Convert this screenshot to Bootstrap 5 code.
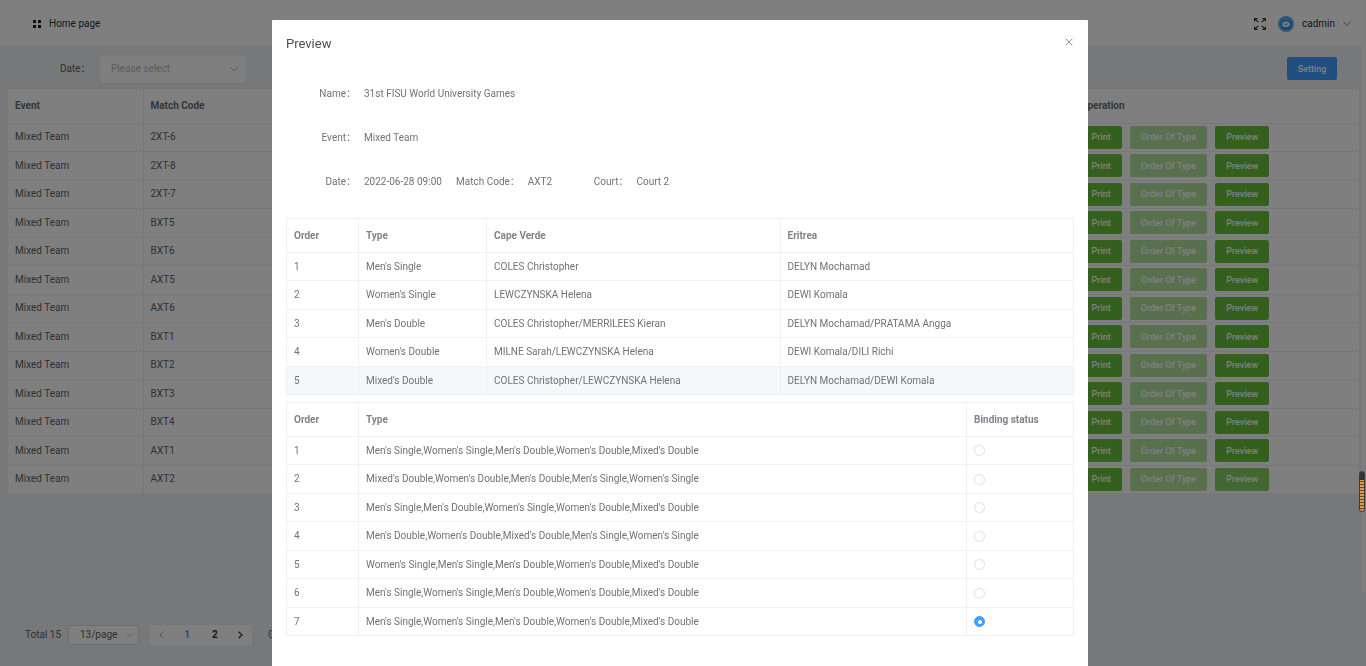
<!DOCTYPE html>
<html lang="en">
<head>
<meta charset="utf-8">
<meta name="viewport" content="width=device-width, initial-scale=1">
<title>Match preview</title>
<link href="https://cdn.jsdelivr.net/npm/bootstrap@5.3.0/dist/css/bootstrap.min.css" rel="stylesheet">
<style>
  body { font-family: Roboto, "Noto Sans CJK SC", sans-serif; font-size: 10px; line-height: 14px; color: #606266; background: #eef1f4; }
  button, input, select { font-family: inherit; }
  .topbar { height: 46px; padding: 2px 10px 0 33px; color: #303133; }
  .topbar a { color: inherit; }
  .filters { height: 43px; padding: 2px 24px 0 60px; }
  .filters label { width: 32px; white-space: nowrap; }
  .flat-select { font-size: 10px; line-height: 14px; border: 1px solid #dcdfe6; border-radius: 2px; color: #606266; background-color: #fff; background-size: 10px 10px; background-position: right 6px center;
    background-image: url("data:image/svg+xml,%3csvg xmlns='http://www.w3.org/2000/svg' viewBox='0 0 10 10'%3e%3cpath fill='none' stroke='%23b0b3ba' d='M1 3l4 4 4-4'/%3e%3c/svg%3e"); }
  .date-select { width: 146px; height: 28px; padding: 0 24px 0 10px; color: #b4b8c0; border-color: #f4f6f9; }
  .page-select { width: 71px; height: 20px; padding: 0 16px 0 11px; background-size: 8px 8px; background-position: right 4px center; }
  .small-btn { height: 23px; padding: 0 11px; border: 0; border-radius: 2px; font-size: 9px; line-height: 14px; color: #fff; font-weight: 500; }
  .btn-set { width: 50px; padding: 0; background: #409eff; }
  .btn-go { background: #67c23a; }
  .btn-go.is-hover { background: #85ce61; }
  .small-btn:disabled { background: #b3e19d; color: #fff; opacity: 1; }
  .op-buttons { gap: 8px; }
  .grid-table { table-layout: fixed; margin: 0; --bs-table-bg: #fff; --bs-table-color: #606266; }
  .grid-table > * > tr > * { padding: 0 7px; vertical-align: middle; border: 0 solid #eff1f5; border-bottom-width: 1px; border-right-width: 1px; color: inherit; }
  .grid-table th { color: #808388; font-weight: 700; }
  .grid-table thead tr { height: 34px; }
  .grid-table tbody tr:nth-child(odd) { height: 28px; }
  .grid-table tbody tr:nth-child(even) { height: 29px; }
  .boxed { border: solid #eff1f5; border-width: 1px 0 0 1px; margin-top: 14px; }
  .boxed + .boxed { margin-top: 7px; }
  .grid-table.boxed td { color: #707276; }
  .row-hover { --bs-table-bg: #f5f7fa; }
  .row-hover td { background: #f5f7fa; }
  .matches { margin: 0 2px 0 8px; }
  .matches .grid-table th { color: #6b6e74; }
  .matches .grid-table th:last-child, .matches .grid-table td:last-child { border-right: 0; }
  .foot { padding: 0 25px 21px; height: 41px; white-space: nowrap; }
  .foot > span:first-child { width: 35px; }
  .pager { background: #fff; border-radius: 2px; width: 102px; height: 20px; margin-left: 3px; }
  .pager button { width: 25px; padding: 0; border: 0; background: none; font-weight: 700; color: #303133; line-height: 20px; }
  .pager .arrow { width: 22px; }
  .pager button.current { color: #409eff; }
  .scroll-lane { width: 5px; height: 592px; background: #fafafc; }
  .modal { width: calc(100% - 6px); scrollbar-width: none; }
  .preview-dialog { max-width: 60%; margin: 20px auto; }
  .preview-dialog .modal-content { border: 0; border-radius: 1px; color: inherit; }
  .preview-dialog .modal-header { border: 0; padding: 14px 14px 6px; height: 52px; align-items: flex-start; }
  .preview-dialog .modal-title { font-size: 13px; line-height: 20px; font-weight: 400; color: #4c4e52; }
  .close-x { border: 0; background: none; padding: 4px 1px; line-height: 0; color: #909399; }
  .preview-dialog .modal-body { padding: 0 14px 60px; }
  .info-row { height: 44px; color: #707276; white-space: nowrap; }
  .info-row dt { font-weight: 400; text-align: right; }
  .info-row dt:first-child { width: 70px; }
  .info-row dd { margin: 0; padding-left: 8px; }
  .info-row .w-date { width: 100px; }
  .info-row .w-code { width: 74px; }
  .pick { margin: 0; width: 11px; height: 11px; border-color: #dcdfe6; display: block; }
  .pick:checked { background-color: #409eff; border-color: #409eff; background-size: 8px 8px; background-position: center; }
  .meter { right: 1px; top: 471px; width: 6px; height: 41px; border-radius: 3px; z-index: 1070; border: 1px solid #3a3a40;
    background: linear-gradient(#33333b 8px, transparent 8px), repeating-linear-gradient(#6b4a28 0 1px, #dc9a44 1px 3px); }
</style>
</head>
<body class="modal-open overflow-hidden">
<div class="vh-100 d-flex">
  <div class="flex-grow-1 d-flex flex-column">
    <header class="topbar bg-white d-flex align-items-center">
      <a href="#" class="d-flex align-items-center text-decoration-none">
        <svg width="8" height="8" viewBox="0 0 8 8" class="me-2" fill="#111"><rect width="3" height="3" rx=".6"/><rect x="5" width="3" height="3" rx=".6"/><rect y="5" width="3" height="3" rx=".6"/><rect x="5" y="5" width="3" height="3" rx=".6"/></svg>
        <span>Home page</span>
      </a>
      <div class="ms-auto d-flex align-items-center gap-2">
        <svg width="12" height="12" viewBox="0 0 12 12" fill="none" stroke="#333" stroke-width="1.1" class="me-1"><path d="M.6 3.6v-3h3M.6.6l3.6 3.6M8.4.6h3v3M11.4.6 7.8 4.2M.6 8.4v3h3M.6 11.4l3.6-3.6M8.4 11.4h3v-3M11.4 11.4 7.8 7.8"/></svg>
        <svg width="16" height="16" viewBox="0 0 16 16"><circle cx="8" cy="8" r="8" fill="#5fb0ee"/><circle cx="8" cy="8" r="6" fill="#3590de"/><path d="M4 4.4q4-3.4 8 0-4-1.4-8 0z" fill="#8fcbf8"/><rect x="4.2" y="5.6" width="7.6" height="5.4" rx="2.7" fill="#e6f4ff"/><path d="M6 7.6q2 2.2 4 0" fill="none" stroke="#3590de" stroke-width=".8"/></svg>
        <span>cadmin</span>
        <svg width="8" height="6" viewBox="0 0 8 6" fill="none" stroke="#808388"><path d="M.6.8 4 4.6 7.4.8"/></svg>
      </div>
    </header>
    <div class="filters d-flex align-items-center">
      <label for="date">Date：</label>
      <select id="date" class="form-select flat-select date-select ms-2"><option>Please select</option></select>
      <button class="btn small-btn btn-set ms-auto">Setting</button>
    </div>
    <div class="matches">
      <table class="table grid-table">
        <colgroup><col style="width:135px"><col><col style="width:286px"></colgroup>
        <thead><tr><th>Event</th><th>Match Code</th><th>Operation</th></tr></thead>
        <tbody id="matchRows"></tbody>
      </table>
    </div>
    <footer class="foot d-flex align-items-center mt-auto">
      <span>Total 15</span>
      <select class="form-select flat-select page-select mx-2" aria-label="Page size"><option>13/page</option></select>
      <div class="pager d-flex justify-content-between">
        <button class="arrow" aria-label="Previous"><svg width="5" height="8" viewBox="0 0 5 8" fill="none" stroke="#a8abb2"><path d="M4.3.8 1 4l3.3 3.2"/></svg></button>
        <button class="current">1</button>
        <button>2</button>
        <button class="arrow" aria-label="Next"><svg width="5" height="8" viewBox="0 0 5 8" fill="none" stroke="#303133" stroke-width="1.2"><path d="M.7.8 4 4 .7 7.2"/></svg></button>
      </div>
      <span class="ms-3">Go to</span>
    </footer>
  </div>
  <div class="scroll-lane flex-shrink-0"></div>
</div>

<div class="modal-backdrop show"></div>
<div class="modal show d-block" tabindex="-1" role="dialog" aria-labelledby="previewTitle">
  <div class="modal-dialog preview-dialog">
    <div class="modal-content">
      <div class="modal-header">
        <h1 class="modal-title" id="previewTitle">Preview</h1>
        <button class="close-x" aria-label="Close"><svg width="8" height="8" viewBox="0 0 8 8" fill="none" stroke="currentColor"><path d="M.7.7l6.6 6.6M7.3.7.7 7.3"/></svg></button>
      </div>
      <div class="modal-body">
        <dl class="d-flex align-items-center m-0 info-row"><dt>Name：</dt><dd>31st FISU World University Games</dd></dl>
        <dl class="d-flex align-items-center m-0 info-row"><dt>Event：</dt><dd>Mixed Team</dd></dl>
        <dl class="d-flex align-items-center m-0 info-row"><dt>Date：</dt><dd class="w-date">2022-06-28 09:00</dd><dt>Match Code：</dt><dd class="w-code">AXT2</dd><dt>Court：</dt><dd>Court 2</dd></dl>
        <table class="table grid-table boxed">
          <colgroup><col style="width:72px"><col style="width:128px"><col><col></colgroup>
          <thead><tr><th>Order</th><th>Type</th><th>Cape Verde</th><th>Eritrea</th></tr></thead>
          <tbody>
            <tr><td>1</td><td>Men's Single</td><td>COLES Christopher</td><td>DELYN Mochamad</td></tr>
            <tr><td>2</td><td>Women's Single</td><td>LEWCZYNSKA Helena</td><td>DEWI Komala</td></tr>
            <tr><td>3</td><td>Men's Double</td><td>COLES Christopher/MERRILEES Kieran</td><td>DELYN Mochamad/PRATAMA Angga</td></tr>
            <tr><td>4</td><td>Women's Double</td><td>MILNE Sarah/LEWCZYNSKA Helena</td><td>DEWI Komala/DILI Richi</td></tr>
            <tr class="row-hover"><td>5</td><td>Mixed's Double</td><td>COLES Christopher/LEWCZYNSKA Helena</td><td>DELYN Mochamad/DEWI Komala</td></tr>
          </tbody>
        </table>
        <table class="table grid-table boxed">
          <colgroup><col style="width:72px"><col><col style="width:107px"></colgroup>
          <thead><tr><th>Order</th><th>Type</th><th>Binding status</th></tr></thead>
          <tbody id="orderRows"></tbody>
        </table>
      </div>
    </div>
  </div>
</div>
<div class="meter position-fixed"></div>

<script src="https://cdn.jsdelivr.net/npm/bootstrap@5.3.0/dist/js/bootstrap.bundle.min.js"></script>
<script>
  const codes = ['2XT-6', '2XT-8', '2XT-7', 'BXT5', 'BXT6', 'AXT5', 'AXT6', 'BXT1', 'BXT2', 'BXT3', 'BXT4', 'AXT1', 'AXT2'];
  document.getElementById('matchRows').innerHTML = codes.map((code, i) => `
    <tr><td>Mixed Team</td><td>${code}</td><td><div class="d-flex op-buttons">
      <button class="btn small-btn btn-go">Print</button>
      <button class="btn small-btn" disabled>Order Of Type</button>
      <button class="btn small-btn btn-go${i === codes.length - 1 ? ' is-hover' : ''}">Preview</button>
    </div></td></tr>`).join('');

  const M = "Men's Single", W = "Women's Single", MD = "Men's Double", WD = "Women's Double", XD = "Mixed's Double";
  const orders = [
    [M, W, MD, WD, XD], [XD, WD, MD, M, W], [M, MD, W, WD, XD], [MD, WD, XD, M, W],
    [W, M, MD, WD, XD], [M, W, MD, WD, XD], [M, W, MD, WD, XD]
  ];
  document.getElementById('orderRows').innerHTML = orders.map((types, i) => `
    <tr><td>${i + 1}</td><td><label for="bind${i}">${types.join(',')}</label></td>
    <td><input class="form-check-input pick" type="radio" name="bind" id="bind${i}"${i === 6 ? ' checked' : ''}></td></tr>`).join('');
</script>
</body>
</html>
